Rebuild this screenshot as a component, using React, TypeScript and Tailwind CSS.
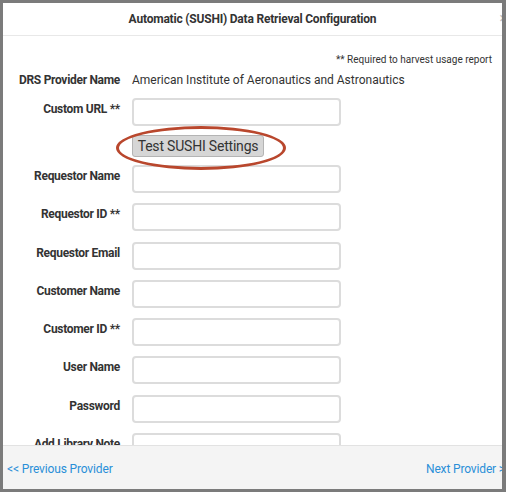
import type { ReactNode } from "react";

const font = "font-['Roboto','Liberation_Sans',sans-serif]";

const FIELDS = [
  "Requestor Name",
  "Requestor ID **",
  "Requestor Email",
  "Customer Name",
  "Customer ID **",
  "User Name",
  "Password",
  "Add Library Note",
];

function Row({ label, children }: { label: string; children: ReactNode }) {
  return (
    <div className="flex items-start">
      <div className="w-[117px] shrink-0 pt-[4px] text-right text-[12px] font-bold leading-[14px] tracking-[-0.3px] text-[#333]">
        {label}
      </div>
      <div className="ml-[12px]">{children}</div>
    </div>
  );
}

function Field() {
  return <input type="text" className="block h-[28px] w-[209px] rounded-[4px] border-2 border-[#dcdcdc] bg-white outline-none" />;
}

export default function App() {
  return (
    <div className={`${font} h-[492px] w-[506px] bg-[#7b7b7b] pb-[3px] pl-[3px] pr-[4px] pt-[3px]`}>
      <div className="relative flex h-full flex-col overflow-hidden bg-white">
        {/* header */}
        <div className="relative flex h-[33px] shrink-0 items-center justify-center border-b border-[#e8e8e8]">
          <span className="text-[12px] font-bold tracking-[-0.2px] text-[#333]">Automatic (SUSHI) Data Retrieval Configuration</span>
          <span className="absolute right-[-5px] top-[8px] text-[14px] leading-none text-[#bbb]">×</span>
        </div>

        {/* scrolling body */}
        <div className="relative flex-1 overflow-hidden">
          <div className="pr-[10px] pt-[18px] text-right text-[10px] leading-[12px] text-[#333]">
            ** Required to harvest usage report
          </div>
          <div className="mt-[5px] flex items-center">
            <div className="w-[117px] shrink-0 text-right text-[12px] font-bold tracking-[-0.3px] text-[#333]">DRS Provider Name</div>
            <div className="ml-[12px] text-[12px] text-[#333]">American Institute of Aeronautics and Astronautics</div>
          </div>

          <div className="mt-[9px]">
            <Row label="Custom URL **">
              <Field />
            </Row>
          </div>

          <div className="relative ml-[129px] mt-[8px] w-fit">
            <button
              type="button"
              className="h-[22px] w-[132px] rounded-[3px] border border-[#b4b4b4] bg-[#d6d6d6] text-[14px] leading-[20px] tracking-[-0.2px] text-[#333]"
            >
              Test SUSHI Settings
            </button>
            {/* red highlight ring */}
            <div className="pointer-events-none absolute left-[-16px] top-[-8px] h-[44px] w-[170px] rounded-[50%] border-[3px] border-[#b9472d]" />
          </div>

          <div className="mt-[7px] flex flex-col gap-y-[10.3px]">
            {FIELDS.map((f) => (
              <Row key={f} label={f}>
                <Field />
              </Row>
            ))}
          </div>
        </div>

        {/* footer */}
        <div className="flex h-[44px] shrink-0 items-center justify-between border-t border-[#e2e2e2] bg-[#f4f4f4] pl-[4px] pt-[3px] text-[12px] tracking-[-0.15px] text-[#2a8fd8]">
          <span>&lt;&lt; Previous Provider</span>
          <span className="mr-[-3px]">Next Provider &gt;</span>
        </div>
      </div>
    </div>
  );
}
